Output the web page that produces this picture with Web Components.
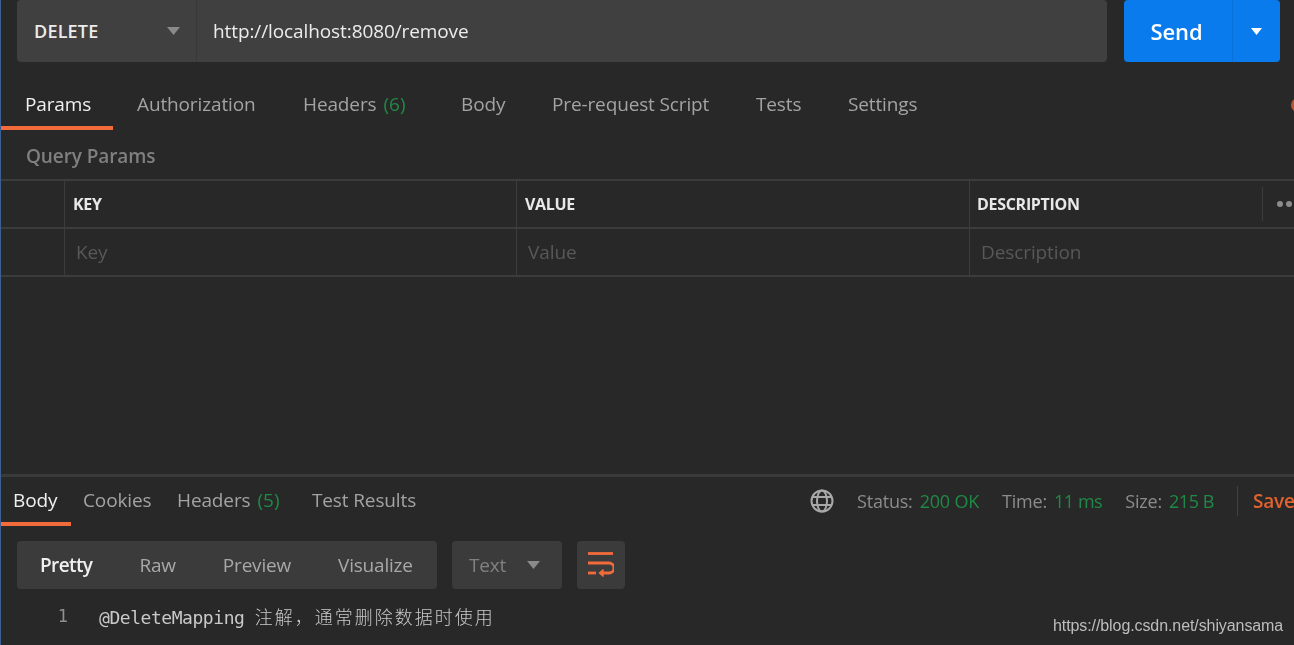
<!DOCTYPE html>
<html lang="en">
<head>
<meta charset="utf-8">
<title>Postman</title>
<style>
  html, body { margin: 0; height: 100%; overflow: hidden; background: #282828; }
  body { font-family: "Open Sans", "Noto Sans CJK SC", sans-serif; color: #f0f0f0; }
</style>
</head>
<body>
<pm-app>
  <pm-request-bar slot="top" method="DELETE" url="http://localhost:8080/remove"></pm-request-bar>
  <pm-tabs slot="top">
    <pm-tab active width="112" pad="24">Params</pm-tab>
    <pm-tab width="166" pad="24">Authorization</pm-tab>
    <pm-tab width="158" pad="24" count="(6)">Headers</pm-tab>
    <pm-tab width="91" pad="24">Body</pm-tab>
    <pm-tab width="204" pad="24">Pre-request Script</pm-tab>
    <pm-tab width="92" pad="24">Tests</pm-tab>
    <pm-tab width="116" pad="24">Settings</pm-tab>
  </pm-tabs>
  <pm-params-table slot="top"></pm-params-table>
  <pm-response-bar slot="bottom"></pm-response-bar>
  <pm-viewer slot="bottom"></pm-viewer>
</pm-app>

<script>
// Icons used in more than one place
const caret = (color, w = 13, h = 8) => `
  <svg width="${w}" height="${h}" viewBox="0 0 13 8" aria-hidden="true"><path d="M0 0h13L6.5 8z" fill="${color}"/></svg>`;

class PmApp extends HTMLElement {
  constructor() {
    super();
    this.attachShadow({ mode: 'open' });
    this.shadowRoot.innerHTML = `
      <style>
        :host { display: flex; flex-direction: column; justify-content: space-between; height: 645px; width: 1294px;
          box-sizing: border-box; border-left: 1px solid #3d5f94; overflow: hidden; position: relative; filter: blur(.35px); }
        .mark { position: absolute; left: 1052px; top: 616px; font: 16px/20px "Liberation Sans", sans-serif; letter-spacing: -.09px; color: #bdbdbd; }
        .dot { position: absolute; left: 1290px; top: 98px; width: 14px; height: 14px; border-radius: 50%; background: #b8572e; }
      </style>
      <div><slot name="top"></slot></div>
      <div><slot name="bottom"></slot></div>
      <span class="dot"></span>
      <span class="mark">https://blog.csdn.net/shiyansama</span>
    `;
  }
}

class PmRequestBar extends HTMLElement {
  constructor() {
    super();
    this.attachShadow({ mode: 'open' });
  }

  connectedCallback() {
    const method = this.getAttribute('method');
    const url = this.getAttribute('url');
    this.shadowRoot.innerHTML = `
      <style>
        :host { display: flex; height: 62px; padding-left: 16px; }
        .input { display: flex; width: 1090px; background: #404040; border-radius: 4px; }
        .method { box-sizing: border-box; width: 180px; display: flex; align-items: center; justify-content: space-between;
          padding: 0 16px 0 17px; font-size: 18px; font-weight: 600; letter-spacing: .2px; color: #ececec; border-right: 1px solid #383838; }
        .url { padding-left: 16px; display: flex; align-items: center; font-size: 19px; letter-spacing: -.1px; color: #ececec; }
        .send { margin-left: 17px; width: 156px; display: flex; background: #097bed; border-radius: 4px; color: #fff; }
        .label { box-sizing: border-box; width: 109px; padding-right: 3px; display: flex; align-items: center; justify-content: center; font-size: 22px; font-weight: 600; letter-spacing: -.1px; border-right: 1px solid #0a6fd6; }
        .more { flex: 1; display: flex; align-items: center; justify-content: center; padding-right: 1px; }
      </style>
      <div class="input">
        <div class="method"><span>${method}</span>${caret('#8a8a8a')}</div>
        <div class="url">${url}</div>
      </div>
      <div class="send"><div class="label">Send</div><div class="more">${caret('#fff', 11, 7)}</div></div>
    `;
  }
}

class PmTabs extends HTMLElement {
  constructor() {
    super();
    this.attachShadow({ mode: 'open' });
    this.shadowRoot.innerHTML = `
      <style>
        :host { display: flex; }
      </style>
      <slot></slot>
    `;
  }
}

class PmTab extends HTMLElement {
  constructor() {
    super();
    this.attachShadow({ mode: 'open' });
  }

  connectedCallback() {
    const w = this.getAttribute('width');
    const pad = this.getAttribute('pad');
    const count = this.getAttribute('count');
    const active = this.hasAttribute('active');
    const h = this.getAttribute('height') || 68;
    const top = this.getAttribute('top') || 29;
    this.shadowRoot.innerHTML = `
      <style>
        :host { display: block; box-sizing: border-box; width: ${w}px; height: ${h}px; padding: ${top}px 0 0 ${pad}px;
          font-size: 19px; letter-spacing: -.13px; line-height: 26px; white-space: nowrap;
          color: ${active ? '#f0f0f0' : '#a3a3a3'};
          border-bottom: 4px solid ${active ? '#f26b3a' : 'transparent'}; }
        span { color: #1f8a45; margin-left: 7px; letter-spacing: 0; }
      </style>
      <slot></slot>${count ? `<span>${count}</span>` : ''}
    `;
  }
}

class PmParamsTable extends HTMLElement {
  constructor() {
    super();
    this.attachShadow({ mode: 'open' });
    this.shadowRoot.innerHTML = `
      <style>
        :host { display: block; }
        h4 { margin: 0; height: 49px; padding-left: 25px; font-size: 19px; line-height: 52px; font-weight: 600; color: #808080; letter-spacing: -.1px; }
        .row { display: grid; grid-template-columns: 63px 452px 453px 1fr; height: 46px; border-top: 2px solid #3c3c3c; }
        .row:last-child { border-bottom: 2px solid #3c3c3c; }
        .row > div { border-left: 1px solid #3c3c3c; padding-left: 8px; display: flex; align-items: center; white-space: nowrap; overflow: hidden; }
        .row > div:first-child { border-left: 0; }
        .head > div { font-size: 16px; font-weight: 700; color: #e8e8e8; letter-spacing: -.3px; }
        .head > div.desc { padding-left: 7px; }
        .ph > div { font-size: 19px; padding-left: 11px; color: #585858; letter-spacing: -.1px; }
        .desc { justify-content: space-between; }
        .tools { display: flex; align-items: center; box-sizing: border-box; height: 34px; width: 32px; border-left: 1px solid #3c3c3c; padding-left: 14px; gap: 3px; flex: none; overflow: hidden; }
        .tools i { width: 6px; height: 6px; border-radius: 50%; background: #8c8c8c; flex: none; }
      </style>
      <h4>Query Params</h4>
      <div class="row head">
        <div></div><div>KEY</div><div>VALUE</div>
        <div class="desc"><span>DESCRIPTION</span><span class="tools"><i></i><i></i><i></i></span></div>
      </div>
      <div class="row ph">
        <div></div><div>Key</div><div>Value</div><div>Description</div>
      </div>
    `;
  }
}

class PmResponseBar extends HTMLElement {
  constructor() {
    super();
    this.attachShadow({ mode: 'open' });
    this.shadowRoot.innerHTML = `
      <style>
        :host { display: flex; justify-content: space-between; height: 49px; border-top: 3px solid #3a3a3a; }
        .tabs { display: flex; }
        .meta { display: flex; align-items: center; font-size: 18px; letter-spacing: -.2px; color: #8c8c8c; width: 484px; box-sizing: border-box; padding-bottom: 2px; white-space: nowrap; overflow: hidden; }
        svg { margin-right: 23px; flex: none; }
        .meta b { font-weight: 400; color: #1f8a45; margin-left: 7px; margin-right: 23px; }
        .meta b.tight { letter-spacing: -.45px; }
        .sep { width: 1px; height: 30px; background: #404040; margin: 0 15px 0 0; flex: none; }
        .save { font-weight: 600; color: #e0622f; font-size: 19px; }
      </style>
      <div class="tabs">
        <pm-tab active width="70" pad="12" height="49" top="10">Body</pm-tab>
        <pm-tab width="94" pad="12" height="49" top="10">Cookies</pm-tab>
        <pm-tab width="135" pad="12" height="49" top="10" count="(5)">Headers</pm-tab>
        <pm-tab width="130" pad="12" height="49" top="10">Test Results</pm-tab>
      </div>
      <div class="meta">
        <svg width="24" height="24" viewBox="0 0 24 24" fill="none" stroke="#a8a8a8" stroke-width="2" aria-hidden="true">
          <circle cx="12" cy="12" r="10.5"/>
          <ellipse cx="12" cy="12" rx="5" ry="10.5"/>
          <path d="M2.5 8h19M2.5 16h19"/>
        </svg>
        <span>Status:</span><b>200 OK</b>
        <span>Time:</span><b class="tight">11 ms</b>
        <span>Size:</span><b class="tight">215 B</b>
        <span class="sep"></span>
        <span class="save">Save</span>
      </div>
    `;
  }
}

class PmViewer extends HTMLElement {
  constructor() {
    super();
    this.attachShadow({ mode: 'open' });
    this.shadowRoot.innerHTML = `
      <style>
        :host { display: block; padding: 15px 0 0 16px; height: 119px; box-sizing: border-box; }
        .bar { display: flex; gap: 15px; height: 48px; }
        .seg, .sel, .wrap { background: #3b3b3b; border-radius: 4px; display: flex; align-items: center; font-size: 19px; letter-spacing: -.2px; }
        .seg { width: 420px; color: #a8a8a8; }
        .seg span { padding-left: 47px; }
        .seg span:first-child { padding-left: 23px; color: #f0f0f0; font-weight: 600; letter-spacing: -.6px; }
        .sel { width: 110px; box-sizing: border-box; padding: 0 22px 0 17px; justify-content: space-between; color: #808080; }
        .wrap { width: 48px; justify-content: center; }
        .code { display: flex; align-items: center; height: 54px; }
        .num { width: 51px; text-align: right; color: #8f8f8f; font: 17px "DejaVu Sans Mono", monospace; }
        .line { margin-left: 31px; color: #c9c9c9; font: 18px "DejaVu Sans Mono", "Noto Sans CJK SC", monospace; white-space: nowrap; letter-spacing: -.45px; }
        .cjk { font-family: "Noto Sans CJK SC", sans-serif; letter-spacing: 2px; font-size: 18px; font-weight: 300; }
      </style>
      <div class="bar">
        <div class="seg"><span>Pretty</span><span>Raw</span><span>Preview</span><span>Visualize</span></div>
        <div class="sel"><span>Text</span>${caret('#8a8a8a')}</div>
        <div class="wrap">
          <svg width="26" height="26" viewBox="0 0 26 26" fill="none" stroke="#f26b3a" stroke-width="2.8" aria-hidden="true">
            <path d="M0 1.5h25"/>
            <path d="M0 11h21a4.8 4.8 0 0 1 0 10h-8"/>
            <path d="M15.5 17.5L11.5 21l4 3.5" fill="#f26b3a" stroke-width="1.5"/>
            <path d="M0 21h8"/>
          </svg>
        </div>
      </div>
      <div class="code">
        <span class="num">1</span>
        <span class="line">@DeleteMapping <span class="cjk">注解，通常删除数据时使用</span></span>
      </div>
    `;
  }
}

customElements.define('pm-app', PmApp);
customElements.define('pm-request-bar', PmRequestBar);
customElements.define('pm-tabs', PmTabs);
customElements.define('pm-tab', PmTab);
customElements.define('pm-params-table', PmParamsTable);
customElements.define('pm-response-bar', PmResponseBar);
customElements.define('pm-viewer', PmViewer);
</script>
</body>
</html>
